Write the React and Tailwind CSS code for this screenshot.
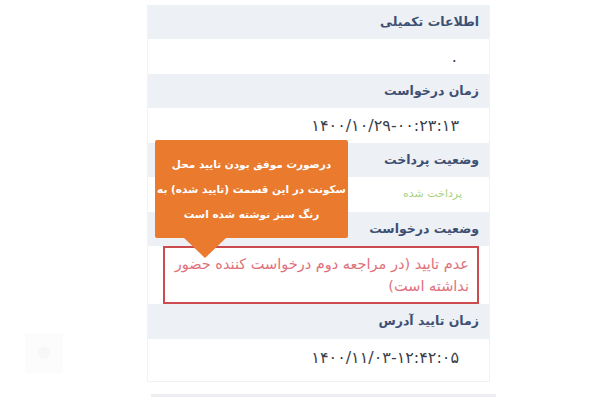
export default function App() {
  const head = "h-[34px] bg-[#edf0f5] flex items-center justify-start pr-[10px] text-[12.5px] font-bold text-[#3d4f72]";
  const val = "h-[35px] bg-white flex items-center justify-start pr-[30px] text-[16px] tracking-[2.2px] text-[#3a3f4a]";
  return (
    <div
      dir="rtl"
      className="relative w-[600px] h-[400px] bg-white overflow-hidden"
      style={{ fontFamily: '"DejaVu Sans", sans-serif' }}
    >
      {/* details card */}
      <div className="pt-[5px] pr-[110px] flex flex-col items-start">
        <div className="w-[343px] border-x border-[#f1f2f4] flex flex-col">
          <div className={head}>اطلاعات تکمیلی</div>
          <div className={val}>.</div>
          <div className={head}>زمان درخواست</div>
          <div className={val}>
            <span dir="ltr">۱۴۰۰/۱۰/۲۹-۰۰:۲۳:۱۳</span>
          </div>
          <div className={head}>وضعیت پرداخت</div>
          <div className="h-[35px] bg-white flex items-center pr-[27px] text-[11px] text-[#a9d47f]">
            پرداخت شده
          </div>
          <div className={head}>وضعیت درخواست</div>
          <div className="h-[58px] bg-white flex">
            <div className="flex-1 mr-[10px] ml-[15px] border-2 border-[#cc4b4f] pr-[8px] pl-[2px] pt-[5px] text-[14.5px] leading-[22px] text-[#e0707a]">
              عدم تایید (در مراجعه دوم درخواست کننده حضور نداشته است)
            </div>
          </div>
          <div className={head + " h-[35px]"}>زمان تایید آدرس</div>
          <div className="h-[43px] bg-white flex items-start pt-[7px] pr-[30px] text-[16px] tracking-[2.2px] text-[#3a3f4a] border-b border-[#f1f2f4]">
            <span dir="ltr">۱۴۰۰/۱۱/۰۳-۱۲:۴۲:۰۵</span>
          </div>
        </div>
        <div className="mt-[12px] h-[3px] w-[345px] mr-[-6px] bg-[#eceef1]"></div>
      </div>

      {/* annotation callout */}
      <div className="absolute left-[155px] top-[140px] w-[193px] h-[98px] bg-[#e97a2e] rounded-[2px] flex flex-col items-center justify-center text-white font-bold text-[10.5px] leading-[25px] text-center whitespace-nowrap">
        <div>درصورت موفق بودن تایید محل</div>
        <div>سکونت در این قسمت (تایید شده) به</div>
        <div>رنگ سبز نوشته شده است</div>
      </div>
      <svg className="absolute left-[183px] top-[237px]" width="44" height="22" viewBox="0 0 44 22">
        <polygon points="0,0 44,0 22,21" fill="#e97a2e" />
      </svg>

      {/* faint floating button */}
      <div className="absolute left-[25px] top-[333px] w-[38px] h-[40px] bg-[#fcfcfc] flex items-center justify-center">
        <div className="w-[12px] h-[12px] rounded-full bg-[#f7f7f7]"></div>
      </div>
    </div>
  );
}
